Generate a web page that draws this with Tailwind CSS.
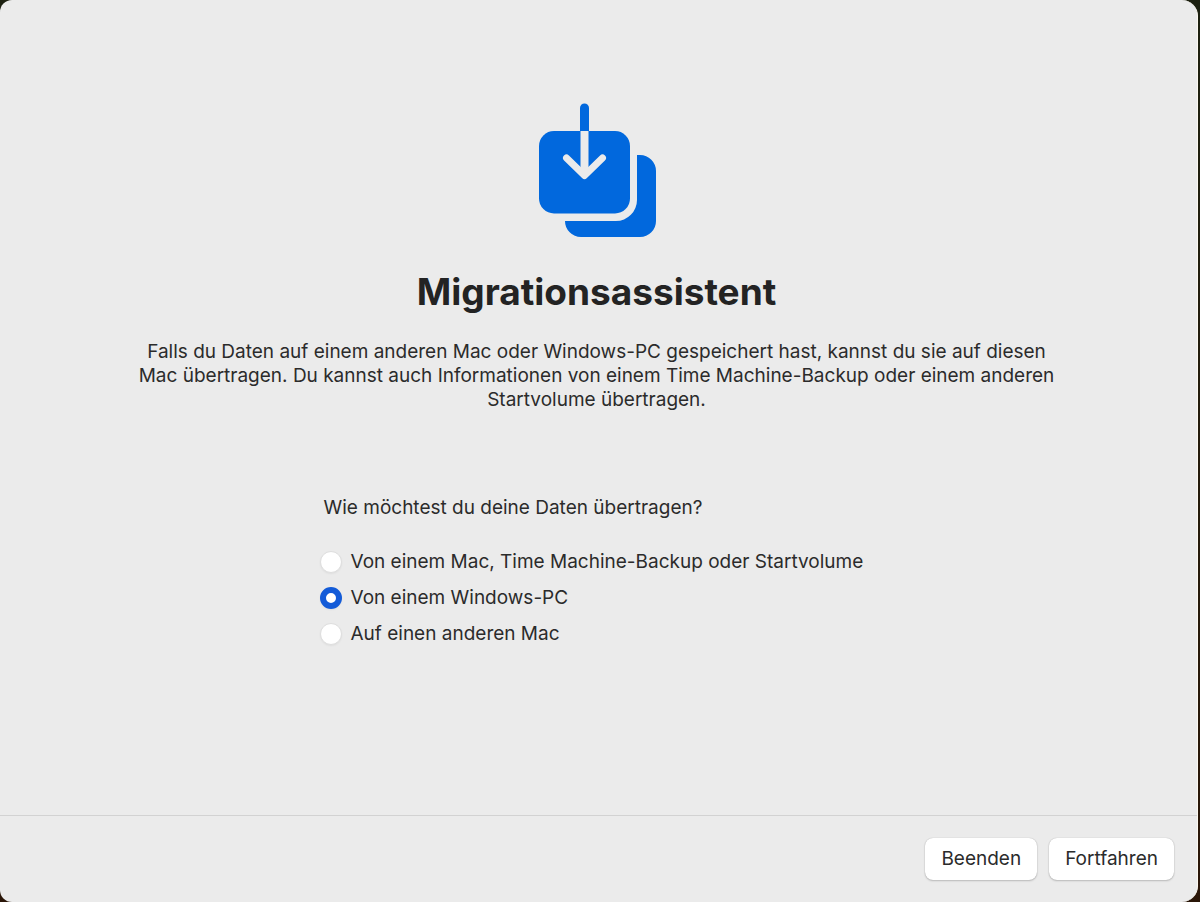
<!DOCTYPE html>
<html lang="de">
<head>
<meta charset="utf-8">
<meta name="viewport" content="width=device-width, initial-scale=1">
<title>Migrationsassistent</title>
<script src="https://cdn.jsdelivr.net/npm/@tailwindcss/browser@4"></script>
</head>
<body class="min-h-screen bg-linear-to-b from-[#1c2010] to-[#2a1608] pr-0.5 font-['Inter','Liberation_Sans',sans-serif] text-[19px] leading-6 text-[#2b2b2b]">
<div class="flex min-h-screen flex-col rounded-l-xl rounded-r-2xl border-r border-[#fbf8f0] bg-[#ebebeb]">
  <main class="flex grow flex-col items-center pt-[103px] pr-33 pl-32">
    <svg class="h-[135px] w-[118px]" viewBox="537 103 118 135" fill="none" aria-hidden="true">
      <path d="M636 155h3a16 16 0 0 1 16 16v50a16 16 0 0 1-16 16h-59a16 16 0 0 1-16-16h51a21 21 0 0 0 21-21z" fill="#0168dd"/>
      <rect x="538" y="131" width="91" height="82.500" rx="15" fill="#0168dd"/>
      <path d="M579 131v-23a4.500 4.500 0 0 1 9 0v23z" fill="#0168dd"/>
      <path d="M583.500 131v44" stroke="#ebebeb" stroke-width="8"/>
      <path d="M565.500 158l18 17.500 18-17.500" stroke="#ebebeb" stroke-width="7" stroke-linecap="round" stroke-linejoin="round"/>
    </svg>
    <h1 class="mt-8 text-[37px] leading-11 font-bold text-[#232323]">Migrationsassistent</h1>
    <p class="mt-[26px] max-w-[940px] text-center">Falls du Daten auf einem anderen Mac oder Windows-PC gespeichert hast, kannst du sie auf diesen Mac übertragen. Du kannst auch Informationen von einem Time Machine-Backup oder einem anderen Startvolume übertragen.</p>
    <fieldset class="mt-[84px] w-full max-w-[554px]">
      <legend class="pl-1">Wie möchtest du deine Daten übertragen?</legend>
      <div class="flex flex-col gap-3 pt-[30px]">
        <label class="flex items-center gap-[9px]"><input type="radio" name="quelle" class="size-[22px] shrink-0 appearance-none rounded-full border border-[#dedede] bg-white shadow-xs checked:border-[6px] checked:border-[#135bd8]">Von einem Mac, Time Machine-Backup oder Startvolume</label>
        <label class="flex items-center gap-[9px]"><input type="radio" name="quelle" checked class="size-[22px] shrink-0 appearance-none rounded-full border border-[#dedede] bg-white shadow-xs checked:border-[6px] checked:border-[#135bd8]">Von einem Windows-PC</label>
        <label class="flex items-center gap-[9px]"><input type="radio" name="quelle" class="size-[22px] shrink-0 appearance-none rounded-full border border-[#dedede] bg-white shadow-xs checked:border-[6px] checked:border-[#135bd8]">Auf einen anderen Mac</label>
      </div>
    </fieldset>
  </main>
  <footer class="flex justify-end gap-3 border-t border-[#d2d2d2] px-[23px] py-[22px]">
    <button type="button" class="h-[42px] rounded-lg bg-white px-4 shadow-[0_0_1px_#0004,0_1px_2px_#0003]">Beenden</button>
    <button type="button" class="h-[42px] rounded-lg bg-white px-4 shadow-[0_0_1px_#0004,0_1px_2px_#0003]">Fortfahren</button>
  </footer>
</div>
</body>
</html>
